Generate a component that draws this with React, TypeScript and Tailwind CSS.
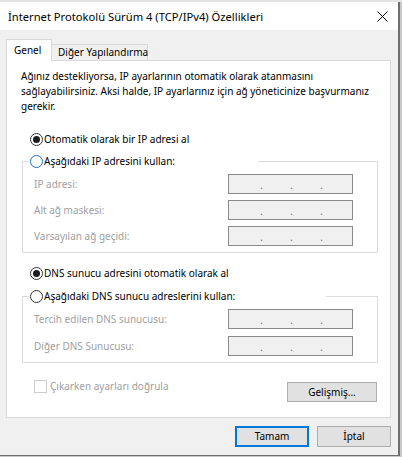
import { ReactNode } from 'react';

const Radio = ({ checked, ring }: { checked?: boolean; ring: string }) => (
  <span className={`flex h-[13px] w-[13px] shrink-0 items-center justify-center rounded-full border bg-white ${ring}`}>
    {checked && <span className="h-[7px] w-[7px] rounded-full bg-[#1b1b1b]" />}
  </span>
);

const IpBox = () => (
  <div className="flex h-[20px] w-[125px] items-end border border-[#8a8a8a] bg-[#f0f0f0] pl-[31px] pb-[3px] text-[11px] leading-[11px] text-[#7d7d7d]">
    <span className="w-[30px]">.</span>
    <span className="w-[30px]">.</span>
    <span>.</span>
  </div>
);

const Field = ({ label }: { label: string }) => (
  <div className="flex items-center justify-between">
    <span className="text-[#a0a0a0]">{label}</span>
    <IpBox />
  </div>
);

const Group = ({ legend, ring, width, children }: { legend: string; ring: string; width: string; children: ReactNode }) => (
  <fieldset className="mx-[15px] mr-[12px] border border-[#dcdcdc]">
    <legend className={`ml-[6px] flex h-[15px] items-center gap-[1px] bg-white pl-[1px] ${width}`}>
      <Radio ring={ring} />
      <span className="whitespace-nowrap">{legend}</span>
    </legend>
    {children}
  </fieldset>
);

const Button = ({ children, primary }: { children: ReactNode; primary?: boolean }) => (
  <button
    className={`flex h-[21px] w-[74px] items-center justify-center bg-[#e1e1e1] text-black ${
      primary ? 'border-2 border-[#0078d7]' : 'border border-[#adadad]'
    }`}
  >
    {children}
  </button>
);

const App = () => {
  return (
    <div className="h-[457px] w-[402px] overflow-hidden bg-[#c9c9c9] font-['Noto_Sans',Arial,sans-serif] text-[10px] leading-[15px] text-black">
      <div className="h-[2px] bg-[#e4e4e4]" />
      <div className="flex h-[454px] w-[400px] flex-col border-r-2 border-b border-[#6f6f6f]">
        {/* title bar */}
        <div className="flex h-[28px] items-center justify-between bg-white pl-[8px] pr-[10px]">
          <span className="text-[11.2px]">İnternet Protokolü Sürüm 4 (TCP/IPv4) Özellikleri</span>
          <svg width="11" height="11" viewBox="0 0 11 11" className="text-black">
            <path d="M0.5 0.5 L10.5 10.5 M10.5 0.5 L0.5 10.5" stroke="currentColor" strokeWidth="1" />
          </svg>
        </div>

        <div className="flex flex-1 flex-col bg-[#f0f0f0] pt-[9px]">
          {/* tabs */}
          <div className="flex items-end pl-[6px]">
            <div className="relative z-10 -mb-px flex h-[22px] w-[46px] items-center border border-b-0 border-[#d9d9d9] bg-white pl-[7px]">
              Genel
            </div>
            <div className="flex h-[16px] w-[96px] items-center whitespace-nowrap border border-b-0 border-l-0 border-[#d9d9d9] bg-[#f0f0f0] pl-[6px]">
              Diğer Yapılandırma
            </div>
          </div>

          {/* panel */}
          <div className="ml-[6px] flex h-[358px] w-[385px] flex-col border border-[#d9d9d9] bg-white">
            <p className="pl-[14px] pt-[8px] whitespace-nowrap">
              Ağınız destekliyorsa, IP ayarlarının otomatik olarak atanmasını
              <br />
              sağlayabilirsiniz. Aksi halde, IP ayarlarınız için ağ yöneticinize başvurmanız
              <br />
              gerekir.
            </p>

            <div className="mt-[18px] flex items-center gap-[1px] pl-[23px]">
              <Radio checked ring="border-[#333333]" />
              <span>Otomatik olarak bir IP adresi al</span>
            </div>

            <div className="mt-[7px]">
              <Group legend="Aşağıdaki IP adresini kullan:" ring="border-[#1a6fc4]" width="w-[229px]">
                <div className="flex flex-col gap-[6px] pl-[11px] pr-[24px] pt-[5px] pb-[6px]">
                  <Field label="IP adresi:" />
                  <Field label="Alt ağ maskesi:" />
                  <Field label="Varsayılan ağ geçidi:" />
                </div>
              </Group>
            </div>

            <div className="mt-[13px] flex items-center gap-[1px] pl-[23px]">
              <Radio checked ring="border-[#333333]" />
              <span>DNS sunucu adresini otomatik olarak al</span>
            </div>

            <div className="mt-[8px]">
              <Group legend="Aşağıdaki DNS sunucu adreslerini kullan:" ring="border-[#333333]" width="w-[297px]">
                <div className="flex flex-col gap-[7px] pl-[11px] pr-[24px] pt-[5px] pb-[6px]">
                  <Field label="Tercih edilen DNS sunucusu:" />
                  <Field label="Diğer DNS Sunucusu:" />
                </div>
              </Group>
            </div>

            <div className="mt-[16px] flex items-start justify-between pl-[27px] pr-[13px]">
              <div className="flex items-center gap-[3px]">
                <span className="h-[13px] w-[13px] border border-[#cccccc] bg-white" />
                <span className="text-[#a0a0a0]">Çıkarken ayarları doğrula</span>
              </div>
              <button className="mt-[3px] flex h-[20px] w-[90px] items-center justify-center border border-[#adadad] bg-[#e1e1e1]">
                Gelişmiş...
              </button>
            </div>
          </div>

          {/* dialog buttons */}
          <div className="mt-[8px] flex justify-end gap-[8px] pr-[7px]">
            <Button primary>Tamam</Button>
            <Button>İptal</Button>
          </div>
        </div>
      </div>
    </div>
  );
};

export default App;
